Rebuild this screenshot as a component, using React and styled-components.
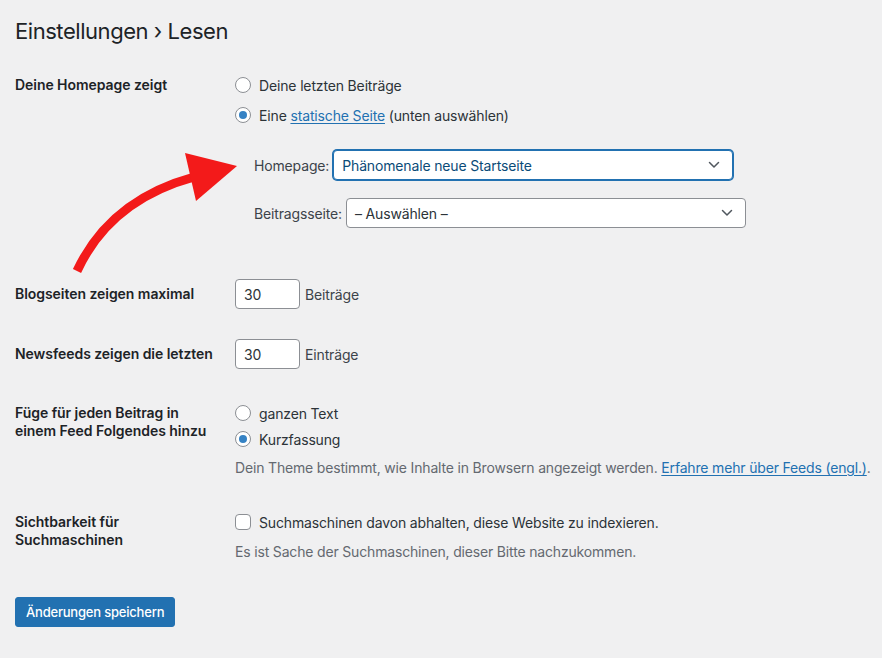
import React from "react";
import styled, { createGlobalStyle } from "styled-components";

const Global = createGlobalStyle`
  html, body { margin: 0; padding: 0; background: #f0f0f1; }
  body { font-family: Inter, "Noto Sans", sans-serif; color: #1d2327; -webkit-font-smoothing: antialiased; }
  * { box-sizing: border-box; }
`;

const Page = styled.div`
  position: relative;
  width: 882px;
  height: 658px;
  padding: 17px 15px 0 15px;
  overflow: hidden;
`;

const Title = styled.h1`
  margin: 0;
  font-size: 22px;
  line-height: 29px;
  font-weight: 400;
  color: #1d2327;
  letter-spacing: -0.45px;
`;

const Row = styled.div`
  display: grid;
  grid-template-columns: 220px 1fr;
  margin-top: ${(p) => p.$top}px;
  align-items: ${(p) => (p.$center ? "center" : "start")};
`;

const Label = styled.div`
  font-size: 14px;
  line-height: 18px;
  font-weight: 600;
  color: #1d2327;
  letter-spacing: -0.05px;
`;

const Stack = styled.div`
  display: flex;
  flex-direction: column;
  gap: ${(p) => p.$gap || 0}px;
`;

const Option = styled.label`
  display: flex;
  align-items: center;
  gap: 8px;
  height: 18px;
  font-size: 14px;
  letter-spacing: -0.15px;
  color: #2c3338;
  white-space: nowrap;
`;

const Radio = styled.span`
  width: 16px;
  height: 16px;
  border-radius: 50%;
  border: 1px solid #8c8f94;
  background: #fff;
  display: flex;
  align-items: center;
  justify-content: center;
  flex: none;
  &::after {
    content: "";
    width: 8px;
    height: 8px;
    border-radius: 50%;
    background: ${(p) => (p.$checked ? "#3582c4" : "transparent")};
  }
`;

const Checkbox = styled.span`
  width: 16px;
  height: 16px;
  border-radius: 4px;
  border: 1px solid #8c8f94;
  background: #fff;
  flex: none;
`;

const Link = styled.a`
  color: #2271b1;
  text-decoration: underline;
  text-underline-offset: 2px;
`;

const SubRows = styled.div`
  display: flex;
  flex-direction: column;
  gap: 18px;
  margin-top: 26px;
  padding-left: 19px;
`;

const SubRow = styled.div`
  display: flex;
  align-items: center;
  gap: 4px;
  font-size: 14px;
  letter-spacing: -0.15px;
  color: #3c434a;
`;

const Select = styled.div`
  width: 400px;
  height: 30px;
  border-radius: 4px;
  border: 1px solid ${(p) => (p.$focus ? "#2271b1" : "#8c8f94")};
  box-shadow: ${(p) => (p.$focus ? "0 0 0 1px #2271b1" : "none")};
  background: #fff;
  display: flex;
  align-items: center;
  justify-content: space-between;
  padding: 0 12px 0 8px;
  font-size: 14px;
  color: ${(p) => (p.$focus ? "#0a4b78" : "#2c3338")};
`;

const Inline = styled.div`
  display: flex;
  align-items: center;
  gap: 5px;
  font-size: 14px;
  letter-spacing: -0.15px;
  color: #3c434a;
`;

const NumberInput = styled.div`
  width: 65px;
  height: 30px;
  border: 1px solid #8c8f94;
  border-radius: 4px;
  background: #fff;
  display: flex;
  align-items: center;
  padding: 0 8px;
  font-size: 14px;
  color: #2c3338;
`;

const Description = styled.p`
  margin: ${(p) => p.$top}px 0 0 0;
  font-size: 14px;
  line-height: 18px;
  letter-spacing: -0.17px;
  color: #646970;
  white-space: nowrap;
`;

const Button = styled.button`
  margin-top: 36px;
  height: 30px;
  padding: 0 10px;
  border: 1px solid #2271b1;
  border-radius: 3px;
  background: #2271b1;
  color: #fff;
  font-family: inherit;
  font-size: 13px;
  font-weight: 500;
  letter-spacing: -0.2px;
`;

const Overlay = styled.svg`
  position: absolute;
  left: 0;
  top: 0;
  pointer-events: none;
`;

const Chevron = () => (
  <svg width="12" height="8" viewBox="0 0 12 8">
    <path d="M1.5 1.5 L6 6 L10.5 1.5" fill="none" stroke="#50575e" strokeWidth="1.5" strokeLinecap="round" strokeLinejoin="round" />
  </svg>
);

export default function App() {
  return (
    <>
      <Global />
      <Page>
        <Title>Einstellungen › Lesen</Title>

        <Row $top={30}>
          <Label>Deine Homepage zeigt</Label>
          <div>
            <Stack $gap={12}>
              <Option><Radio /><span>Deine letzten Beiträge</span></Option>
              <Option><Radio $checked /><span>Eine <Link href="#">statische Seite</Link> (unten auswählen)</span></Option>
            </Stack>
            <SubRows>
              <SubRow>
                Homepage:
                <Select $focus>Phänomenale neue Startseite<Chevron /></Select>
              </SubRow>
              <SubRow>
                Beitragsseite:
                <Select>– Auswählen –<Chevron /></Select>
              </SubRow>
            </SubRows>
          </div>
        </Row>

        <Row $top={51} $center>
          <Label>Blogseiten zeigen maximal</Label>
          <Inline><NumberInput>30</NumberInput>Beiträge</Inline>
        </Row>

        <Row $top={30} $center>
          <Label>Newsfeeds zeigen die letzten</Label>
          <Inline><NumberInput>30</NumberInput>Einträge</Inline>
        </Row>

        <Row $top={35}>
          <Label>Füge für jeden Beitrag in<br />einem Feed Folgendes hinzu</Label>
          <div>
            <Stack $gap={8}>
              <Option><Radio /><span>ganzen Text</span></Option>
              <Option><Radio $checked /><span>Kurzfassung</span></Option>
            </Stack>
            <Description $top={11}>
              Dein Theme bestimmt, wie Inhalte in Browsern angezeigt werden. <Link href="#">Erfahre mehr über Feeds (engl.)</Link>.
            </Description>
          </div>
        </Row>

        <Row $top={36}>
          <Label>Sichtbarkeit für<br />Suchmaschinen</Label>
          <div>
            <Option><Checkbox /><span>Suchmaschinen davon abhalten, diese Website zu indexieren.</span></Option>
            <Description $top={12}>Es ist Sache der Suchmaschinen, dieser Bitte nachzukommen.</Description>
          </div>
        </Row>

        <Button>Änderungen speichern</Button>

        <Overlay width="882" height="658" viewBox="0 0 882 658">
          <path d="M77 271 Q110 200 194 177" fill="none" stroke="#f31a1a" strokeWidth="9" />
          <polygon points="185,153 237,166 196,201" fill="#f31a1a" />
        </Overlay>
      </Page>
    </>
  );
}
